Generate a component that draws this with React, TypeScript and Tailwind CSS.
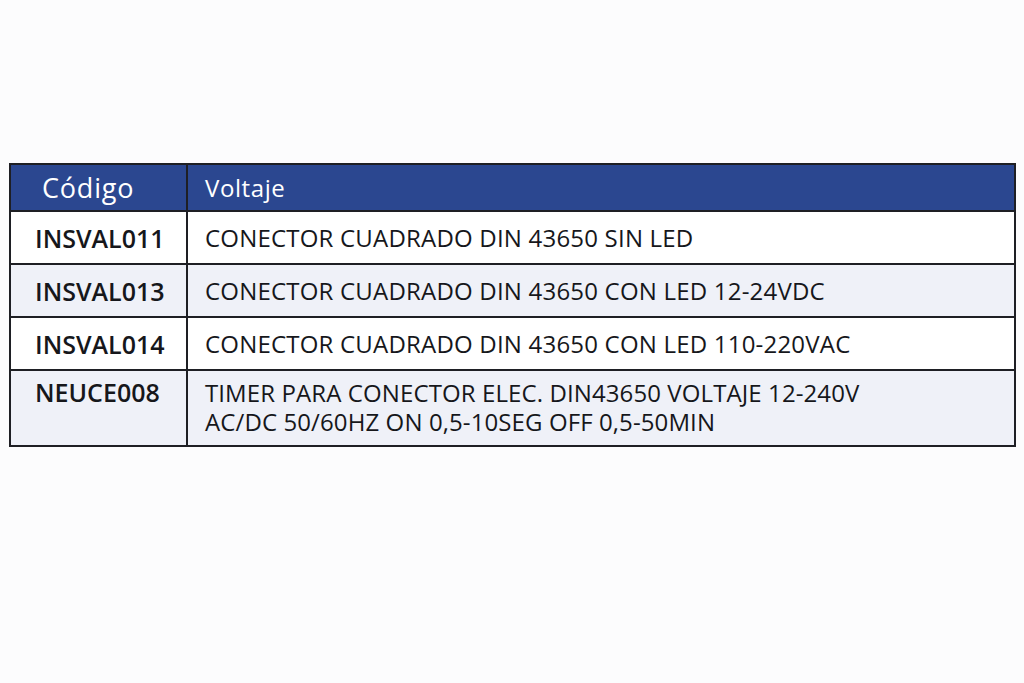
import React from "react";

type Row = {
  code: string;
  lines: string[];
};

const rows: Row[] = [
  { code: "INSVAL011", lines: ["CONECTOR CUADRADO DIN 43650 SIN LED"] },
  { code: "INSVAL013", lines: ["CONECTOR CUADRADO DIN 43650 CON LED 12-24VDC"] },
  { code: "INSVAL014", lines: ["CONECTOR CUADRADO DIN 43650 CON LED 110-220VAC"] },
  {
    code: "NEUCE008",
    lines: [
      "TIMER PARA CONECTOR ELEC. DIN43650 VOLTAJE 12-240V",
      "AC/DC 50/60HZ ON 0,5-10SEG OFF 0,5-50MIN",
    ],
  },
];

function App() {
  return (
    <div
      className="w-[1024px] h-[683px] bg-[#fcfcfd] pt-[163px] pl-[9px]"
      style={{ fontFamily: '"Open Sans", "Noto Sans", sans-serif' }}
    >
      <table className="w-[1007px] border-collapse border-2 border-[#1e1f24] text-[#16171b]">
        <thead>
          <tr className="bg-[#2b4790] text-white h-[47px]">
            <th className="w-[177px] border-2 border-[#1e1f24] text-left pl-[31px] text-[27px] tracking-[0.8px] font-normal leading-[30px]">
              Código
            </th>
            <th className="border-2 border-[#1e1f24] text-left pl-[17px] text-[24px] tracking-[0.6px] font-normal leading-[30px]">
              Voltaje
            </th>
          </tr>
        </thead>
        <tbody>
          {rows.map((row, i) => (
            <tr
              key={row.code}
              className={i % 2 === 1 ? "bg-[#eff1f8]" : "bg-white"}
            >
              <td
                className={
                  row.lines.length > 1
                    ? "border-2 border-[#1e1f24] align-top pl-[24px] pt-[6px] h-[76px] text-[25px] font-semibold leading-[30px]"
                    : "border-2 border-[#1e1f24] pl-[24px] h-[53px] text-[25px] font-semibold leading-[30px]"
                }
              >
                {row.code}
              </td>
              <td
                className={
                  row.lines.length > 1
                    ? "border-2 border-[#1e1f24] align-top pl-[17px] pt-[7px] text-[24px] tracking-[0.1px] leading-[29px]"
                    : "border-2 border-[#1e1f24] pl-[17px] text-[24px] tracking-[0.2px] leading-[30px]"
                }
              >
                {row.lines.map((l) => (
                  <div key={l}>{l}</div>
                ))}
              </td>
            </tr>
          ))}
        </tbody>
      </table>
    </div>
  );
}

export default App;
